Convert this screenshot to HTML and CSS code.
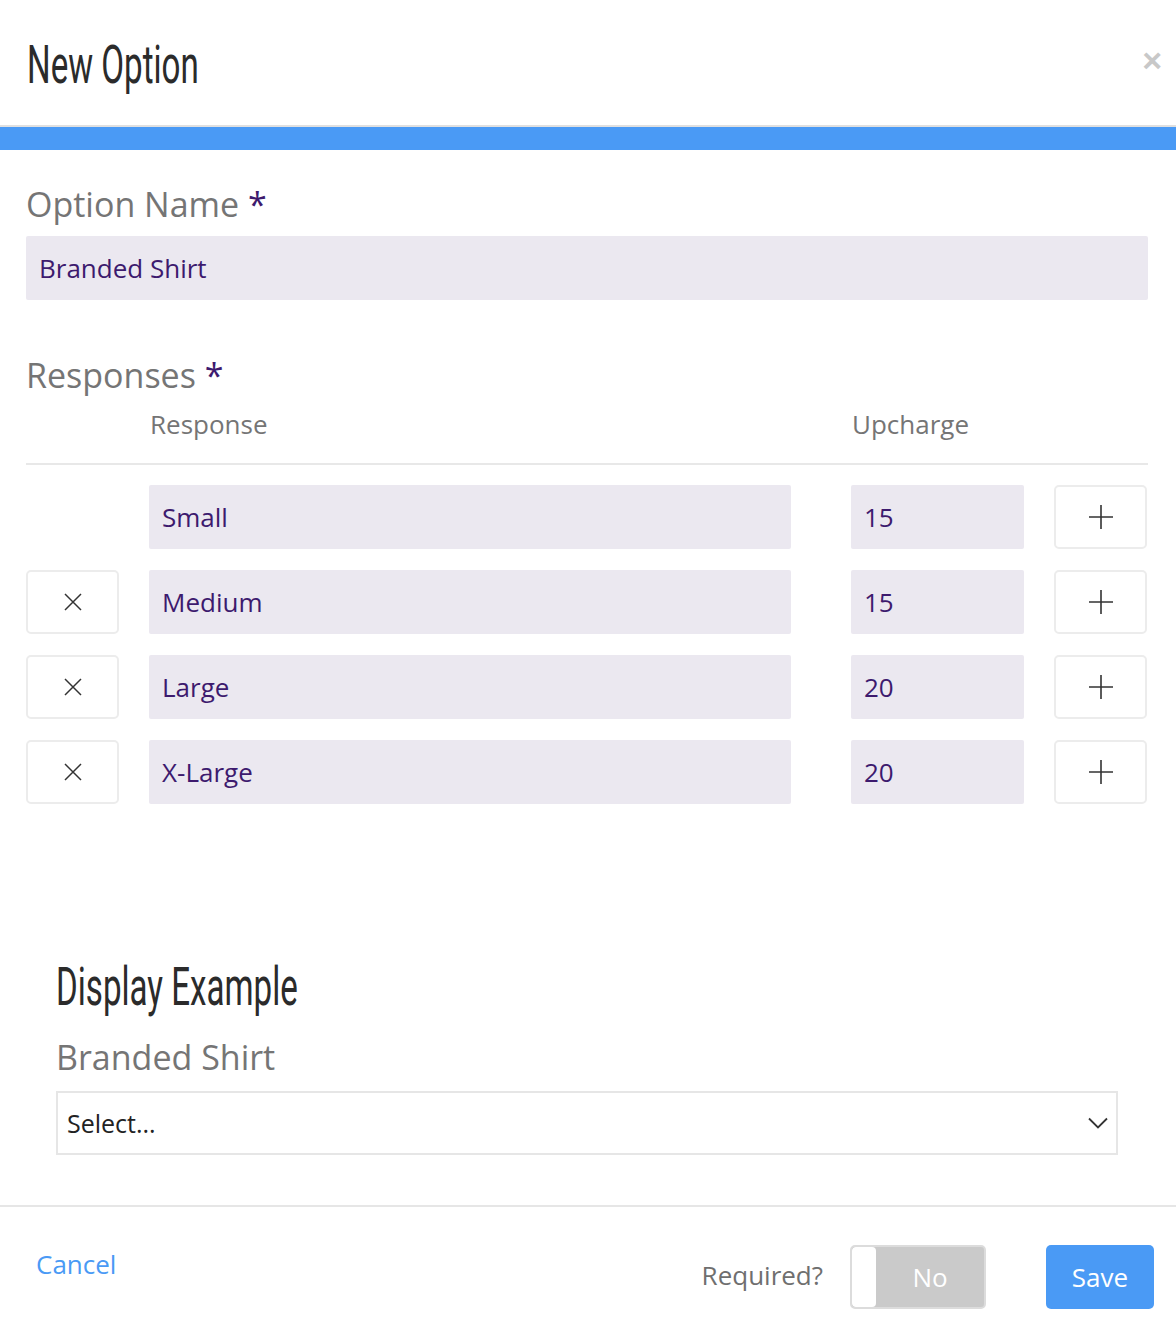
FILE: index.html
```html
<!DOCTYPE html>
<html lang="en">
<head>
<meta charset="utf-8" />
<title>New Option</title>
<link rel="stylesheet" href="styles.css">
</head>
<body>
<div class="modal">
  <div class="modal-header">
    <h1>New Option</h1>
    <span class="close">&times;</span>
  </div>
  <div class="modal-bar"></div>

  <div class="modal-body">
    <div class="field">
      <label class="label">Option Name <span class="req">*</span></label>
      <div class="input wide">Branded Shirt</div>
    </div>

    <div class="field responses">
      <label class="label">Responses <span class="req">*</span></label>
      <div class="row head">
        <div class="cell-btn"></div>
        <div class="cell-resp">Response</div>
        <div class="cell-up">Upcharge</div>
        <div class="cell-btn"></div>
      </div>
      <div class="rows">
        <div class="row">
          <div class="cell-btn"></div>
          <div class="input cell-resp">Small</div>
          <div class="input cell-up">15</div>
          <button class="icon-btn cell-btn"><svg width="26" height="26" viewBox="0 0 26 26"><path d="M13 1v24M1 13h24" stroke="#333" stroke-width="1.6" fill="none"/></svg></button>
        </div>
        <div class="row">
          <button class="icon-btn cell-btn"><svg width="18" height="18" viewBox="0 0 18 18"><path d="M1 1l16 16M17 1L1 17" stroke="#333" stroke-width="1.5" fill="none"/></svg></button>
          <div class="input cell-resp">Medium</div>
          <div class="input cell-up">15</div>
          <button class="icon-btn cell-btn"><svg width="26" height="26" viewBox="0 0 26 26"><path d="M13 1v24M1 13h24" stroke="#333" stroke-width="1.6" fill="none"/></svg></button>
        </div>
        <div class="row">
          <button class="icon-btn cell-btn"><svg width="18" height="18" viewBox="0 0 18 18"><path d="M1 1l16 16M17 1L1 17" stroke="#333" stroke-width="1.5" fill="none"/></svg></button>
          <div class="input cell-resp">Large</div>
          <div class="input cell-up">20</div>
          <button class="icon-btn cell-btn"><svg width="26" height="26" viewBox="0 0 26 26"><path d="M13 1v24M1 13h24" stroke="#333" stroke-width="1.6" fill="none"/></svg></button>
        </div>
        <div class="row">
          <button class="icon-btn cell-btn"><svg width="18" height="18" viewBox="0 0 18 18"><path d="M1 1l16 16M17 1L1 17" stroke="#333" stroke-width="1.5" fill="none"/></svg></button>
          <div class="input cell-resp">X-Large</div>
          <div class="input cell-up">20</div>
          <button class="icon-btn cell-btn"><svg width="26" height="26" viewBox="0 0 26 26"><path d="M13 1v24M1 13h24" stroke="#333" stroke-width="1.6" fill="none"/></svg></button>
        </div>
      </div>
    </div>

    <div class="example">
      <h2>Display Example</h2>
      <div class="example-label">Branded Shirt</div>
      <div class="select">
        <span>Select...</span>
        <svg width="20" height="12" viewBox="0 0 20 12"><path d="M1 1.5l9 9 9-9" stroke="#333" stroke-width="1.8" fill="none"/></svg>
      </div>
    </div>
  </div>

  <div class="modal-footer">
    <a class="cancel" href="#">Cancel</a>
    <div class="footer-right">
      <span class="required">Required?</span>
      <div class="toggle">
        <span class="knob"></span>
        <span class="toggle-text">No</span>
      </div>
      <button class="save">Save</button>
    </div>
  </div>
</div>
</body>
</html>
```

FILE: styles.css
```css
body {
  margin: 0;
  padding: 0;
  background-color: #fff;
  font-family: "Open Sans", Arial, sans-serif;
}

.modal {
  width: 1176px;
  height: 1340px;
  background-color: #fff;
}

.modal-header {
  height: 127px;
  border-bottom: 2px solid #e0e0e0;
  display: flex;
  align-items: center;
  justify-content: space-between;
  padding: 0 14px 0 27px;
  box-sizing: border-box;
}

/* condensed display face, narrowed by hand */
h1,
h2 {
  font-family: Roboto, "Liberation Sans", sans-serif;
  font-weight: 400;
  color: #2b2b2b;
  margin: 0;
  display: inline-block;
  transform: scaleX(0.625);
  transform-origin: left center;
  white-space: nowrap;
}

h1 {
  font-size: 53px;
  margin-top: 4px;
}

.close {
  font-family: Arial, sans-serif;
  font-size: 34px;
  font-weight: bold;
  color: #c8c8c8;
  margin-top: -4px;
}

.modal-bar {
  height: 23px;
  background-color: #4a9af5;
}

.modal-body {
  padding: 31px 28px 0 26px;
}

.label {
  display: block;
  font-size: 34px;
  color: #757575;
  line-height: 46px;
  margin-bottom: 9px;
}

.req {
  color: #3d1a6e;
}

.input {
  background-color: #ebe8f0;
  border-radius: 2px;
  height: 64px;
  line-height: 64px;
  padding: 0 13px;
  box-sizing: border-box;
  font-size: 26px;
  color: #3d1a6e;
}

.responses {
  margin-top: 52px;
}

.responses .label {
  margin-bottom: 0;
}

.row {
  display: flex;
  gap: 30px;
}

.row .cell-up {
  margin-left: 30px;
}

.cell-btn {
  width: 93px;
  flex: none;
}

.cell-resp {
  width: 642px;
  flex: none;
}

.cell-up {
  width: 173px;
  flex: none;
}

.head {
  font-size: 26px;
  color: #757575;
  height: 65px;
  line-height: 52px;
  border-bottom: 2px solid #e8e8e8;
}

.head .cell-resp {
  padding-left: 1px;
}

.rows {
  display: flex;
  flex-direction: column;
  gap: 21px;
  margin-top: 20px;
}

.icon-btn {
  height: 64px;
  background-color: #fff;
  border: 2px solid #ececec;
  border-radius: 5px;
  display: flex;
  align-items: center;
  justify-content: center;
  padding: 0;
  box-sizing: border-box;
}

.example {
  padding: 150px 30px 0 30px;
}

h2 {
  font-size: 53px;
  line-height: 60px;
  margin-top: 3px;
}

.example-label {
  font-size: 34px;
  color: #757575;
  margin-top: 17px;
  line-height: 46px;
}

.select {
  margin-top: 11px;
  height: 64px;
  border: 2px solid #e6e6e6;
  box-sizing: border-box;
  display: flex;
  align-items: center;
  justify-content: space-between;
  padding: 0 8px 0 9px;
  font-size: 25px;
  color: #222;
}

.modal-footer {
  margin-top: 50px;
  border-top: 2px solid #e6e6e6;
  display: flex;
  align-items: center;
  justify-content: space-between;
  padding: 38px 22px 0 36px;
}

.cancel {
  font-size: 26px;
  color: #4a9af5;
  text-decoration: none;
  margin-top: -26px;
}

.footer-right {
  display: flex;
  align-items: center;
}

.required {
  font-size: 26px;
  color: #6f6f6f;
  margin-right: 27px;
  margin-top: -4px;
}

.toggle {
  width: 136px;
  height: 64px;
  box-sizing: border-box;
  border: 2px solid #dcdcdc;
  border-radius: 5px;
  background-color: #cacaca;
  display: flex;
  align-items: stretch;
  overflow: hidden;
}

.knob {
  width: 24px;
  background-color: #fff;
  border-radius: 4px;
}

.toggle-text {
  flex: 1;
  text-align: center;
  line-height: 60px;
  font-size: 26px;
  color: #fff;
}

.save {
  margin-left: 60px;
  width: 108px;
  height: 64px;
  border: none;
  border-radius: 5px;
  background-color: #4a9af5;
  color: #fff;
  font-family: "Open Sans", Arial, sans-serif;
  font-size: 26px;
  padding: 0;
}
```
